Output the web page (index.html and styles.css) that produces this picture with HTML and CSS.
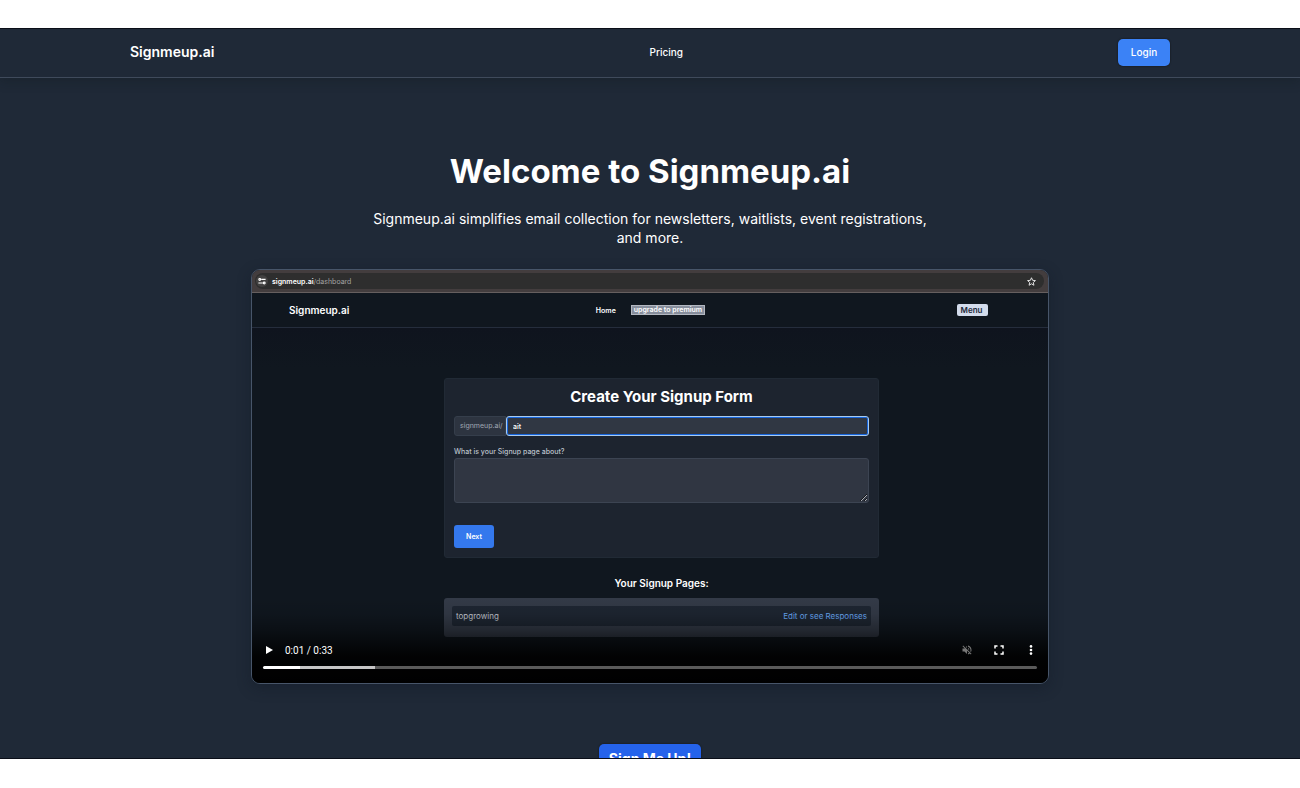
FILE: index.html
```html
<!DOCTYPE html>
<html lang="en">
<head>
<meta charset="utf-8">
<meta name="viewport" content="width=device-width, initial-scale=1">
<title>Signmeup.ai</title>
<link rel="stylesheet" href="styles.css">
</head>
<body>
<div class="page">
  <header class="site-header">
    <a class="brand" href="#">Signmeup.ai</a>
    <nav class="site-nav"><a class="nav-link" href="#pricing">Pricing</a></nav>
    <button class="login" type="button">Login</button>
  </header>
  <main class="hero">
    <h1 class="hero-title">Welcome to Signmeup.ai</h1>
    <p class="hero-text">Signmeup.ai simplifies email collection for newsletters, waitlists, event registrations, and more.</p>
    <section class="player" aria-label="Product demo">
      <div class="address-bar">
        <div class="address">
          <span class="site-info"><svg width="8" height="8" viewBox="0 0 10 10" fill="none" stroke="#fff" stroke-width="1.500"><path d="M4 3h5.500M.5 7.500H6"/><circle cx="2.200" cy="3" r="1.100"/><circle cx="7.800" cy="7.500" r="1.100"/></svg></span>
          <span class="url"><b>signmeup.ai</b>/dashboard</span>
          <svg class="star" width="9" height="9" viewBox="0 0 24 24" fill="none" stroke="#e5e5e5" stroke-width="2.600" stroke-linejoin="round"><path d="M12 2l3 6.900 7.500.7-5.700 5 1.700 7.400-6.500-3.900L5.500 22l1.700-7.400-5.700-5L9 8.900z"/></svg>
        </div>
      </div>
      <div class="app-nav">
        <a class="app-brand" href="#">Signmeup.ai</a>
        <nav class="app-links">
          <a class="app-link" href="#">Home</a>
          <a class="upgrade" href="#">upgrade to premium</a>
        </nav>
        <button class="app-menu" type="button">Menu</button>
      </div>
      <div class="app-body">
        <form class="card">
          <h2 class="card-title">Create Your Signup Form</h2>
          <div class="slug">
            <label class="slug-prefix" for="slug">signmeup.ai/</label>
            <input class="slug-input" id="slug" type="text" value="ait">
          </div>
          <label class="label" for="about">What is your Signup page about?</label>
          <textarea class="about" id="about"></textarea>
          <button class="next" type="button">Next</button>
        </form>
        <h3 class="pages-title">Your Signup Pages:</h3>
        <div class="pages">
          <div class="page-row"><span>topgrowing</span><a class="edit" href="#">Edit or see Responses</a></div>
        </div>
      </div>
      <div class="controls">
        <div class="control-row">
          <button class="control" type="button" aria-label="Play"><svg width="8" height="8" viewBox="0 0 8 8" fill="#fff"><path d="M1 0l7 4-7 4z"/></svg></button>
          <span class="time">0:01 / 0:33</span>
          <button class="control" type="button" aria-label="Unmute"><svg width="12" height="12" viewBox="0 0 24 24" fill="#777"><path d="M16.500 12c0-1.770-1.020-3.290-2.500-4.030v2.210l2.450 2.450c.03-.2.050-.41.050-.63zm2.500 0c0 .94-.2 1.820-.54 2.640l1.510 1.510C20.630 14.910 21 13.500 21 12c0-4.280-2.990-7.860-7-8.770v2.060c2.890.86 5 3.540 5 6.710zM4.270 3L3 4.270 7.730 9H3v6h4l5 5v-6.730l4.250 4.250c-.67.520-1.420.93-2.250 1.180v2.060c1.380-.31 2.630-.95 3.690-1.810L19.730 21 21 19.730l-9-9L4.270 3zM12 4L9.910 6.090 12 8.180V4z"/></svg></button>
          <button class="control" type="button" aria-label="Full screen"><svg width="10" height="10" viewBox="0 0 10 10" fill="none" stroke="#fff" stroke-width="1.500"><path d="M1 3.500V1h2.500M6.500 1H9v2.500M9 6.500V9H6.500M3.500 9H1V6.500"/></svg></button>
          <button class="control" type="button" aria-label="More options"><svg width="4" height="10" viewBox="0 0 4 10" fill="#fff"><circle cx="2" cy="1.400" r="1.300"/><circle cx="2" cy="5" r="1.300"/><circle cx="2" cy="8.600" r="1.300"/></svg></button>
        </div>
        <div class="track"></div>
      </div>
    </section>
    <button class="cta" type="button">Sign Me Up!</button>
  </main>
</div>
</body>
</html>
```
FILE: styles.css
```css
* { box-sizing: border-box; }
body {
  margin: 0;
  padding: 28px 0 29px;
  height: 100vh;
  background: #fff;
  color: #fff;
  font-family: Inter, "Liberation Sans", sans-serif;
}
a { color: inherit; text-decoration: none; }
button { border: 0; padding: 0; color: inherit; font-family: inherit; }
h1, h2, h3, p { margin: 0; }
.page {
  height: 100%;
  overflow: hidden;
  background: #1f2937;
  border-top: 1px solid #0a0e18;
  border-bottom: 1px solid #0a0e18;
}
.site-header {
  display: flex;
  align-items: center;
  justify-content: space-between;
  height: 49px;
  padding: 0 10% 2px;
  border-bottom: 1px solid #3f4a5b;
  box-shadow: 0 4px 10px rgba(15, 25, 30, 0.300);
}
.brand { font-size: 14px; line-height: 20px; font-weight: 600; }
.site-nav { display: flex; }
.nav-link { font-size: 10px; line-height: 14px; font-weight: 500; }
.login {
  width: 52px;
  height: 27px;
  border-radius: 5px;
  background: #3b82f6;
  box-shadow: 0 0 1px 1px #1b222c;
  font-size: 10px;
  font-weight: 500;
}
.hero {
  display: flex;
  flex-direction: column;
  align-items: center;
  padding: 73px 16px 0;
}
.hero-title { font-size: 33px; line-height: 40px; font-weight: 700; }
.hero-text {
  max-width: 560px;
  margin: 18px 0 22px;
  font-size: 14px;
  line-height: 19px;
  text-align: center;
}
.player {
  position: relative;
  flex-shrink: 0;
  width: 100%;
  max-width: 798px;
  overflow: hidden;
  border: 1px solid #475569;
  border-radius: 9px;
  background: #10171f;
  box-shadow: 0 4px 14px rgba(15, 23, 35, 0.400);
}
.address-bar {
  height: 23px;
  padding: 3px 4px 3px 3px;
  border-bottom: 1px solid #665f5f;
  background: #433d3e;
}
.address {
  display: flex;
  align-items: center;
  gap: 4px;
  height: 16px;
  padding: 0 8px 0 1px;
  border-radius: 8px;
  background: #2e2e2e;
  font-size: 7px;
}
.site-info {
  display: grid;
  place-items: center;
  width: 12px;
  height: 12px;
  border-radius: 6px;
  background: #424141;
}
.url { color: #a3a3a3; }
.url b { color: #fff; font-weight: 600; }
.star { margin-left: auto; }
.app-nav {
  display: grid;
  grid-template-columns: 1fr auto 1fr;
  align-items: center;
  height: 35px;
  padding: 0 60px 0 37px;
  border-bottom: 1px solid #252d3c;
  font-weight: 600;
}
.app-brand { font-size: 10px; }
.app-links { display: flex; align-items: center; gap: 15px; padding-left: 24px; font-size: 7px; }
.upgrade {
  padding: 0 2px;
  border: 1px solid #b3b8c1;
  background: #878e9c;
  line-height: 8px;
}
.app-menu {
  justify-self: end;
  width: 31px;
  height: 12px;
  padding-right: 2px;
  border-radius: 2px;
  background: #d3dcec;
  color: #1d283a;
  font-size: 8px;
  font-weight: 600;
}
.app-body {
  display: flex;
  flex-direction: column;
  align-items: center;
  padding: 50px 0 46px 23px;
  background: linear-gradient(#0f141e, #10171f 40px);
}
.card {
  display: flex;
  flex-direction: column;
  width: 435px;
  padding: 9px;
  border: 1px solid #212a35;
  border-radius: 3px;
  background: #1d242f;
}
.card-title { font-size: 15px; line-height: 18px; font-weight: 700; text-align: center; }
.slug { display: flex; margin-top: 10px; height: 20px; }
.slug-prefix {
  width: 52px;
  padding-left: 5px;
  border: 1px solid #353e4b;
  border-radius: 3px 0 0 3px;
  background: #2d3440;
  color: #a0a7b3;
  font-size: 7px;
  line-height: 18px;
}
.slug-input {
  flex: 1;
  min-width: 0;
  padding: 0 6px;
  border: 1px solid #a9cbee;
  border-radius: 3px;
  outline: 0;
  background: #303743;
  box-shadow: inset 0 0 0 1px #1765dc;
  color: #fff;
  font: 500 7px Inter, sans-serif;
}
.label { margin-top: 11px; color: #bcc2cb; font-size: 7px; font-weight: 500; line-height: 10px; }
.about {
  height: 45px;
  margin-top: 1px;
  border: 1px solid #3c4452;
  border-radius: 3px;
  background: #303642;
  color: #fff;
}
.next {
  width: 40px;
  height: 23px;
  margin-top: 22px;
  border-radius: 3px;
  background: #3478ed;
  font-size: 7px;
  font-weight: 600;
}
.pages-title { margin: 19px 0 8px; font-size: 10px; line-height: 13px; font-weight: 600; }
.pages {
  width: 435px;
  padding: 8px 8px 11px;
  border-radius: 3px;
  background: #333a47;
}
.page-row {
  display: flex;
  align-items: center;
  justify-content: space-between;
  height: 20px;
  padding: 0 4px;
  border-radius: 2px;
  background: #1e2632;
  color: #c2c7cf;
  font-size: 8px;
}
.edit { color: #69a9f7; }
.controls {
  position: absolute;
  right: 0;
  bottom: 0;
  left: 0;
  padding: 65px 11px 14px;
  background: linear-gradient(transparent 20%, rgba(0, 0, 0, 0.080) 35%, rgba(0, 0, 0, 0.320) 50%, rgba(0, 0, 0, 0.900) 75%, #000);
}
.control-row { display: flex; align-items: center; height: 16px; margin-bottom: 8px; }
.control { display: grid; place-items: center; width: 12px; height: 16px; background: transparent; }
.time { margin: 0 auto 0 10px; font: 10px Roboto, sans-serif; }
.control + .control { margin-left: 20px; }
.track {
  height: 3px;
  border-radius: 2px;
  background: linear-gradient(90deg, #fff 37px, #c6c6c6 37px 112px, #5a5a5a 112px);
}
.cta {
  flex-shrink: 0;
  width: 102px;
  height: 28px;
  margin-top: 60px;
  border-radius: 5px;
  background: #2563eb;
  box-shadow: 0 0 1px 1px #1c222c;
  font-size: 14px;
  font-weight: 700;
}
```
